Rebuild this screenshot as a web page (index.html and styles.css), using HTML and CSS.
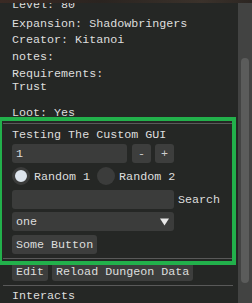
FILE: index.html
```html
<!DOCTYPE html>
<html lang="en">
<head>
<meta charset="utf-8">
<link rel="stylesheet" href="styles.css">
</head>
<body>
<div class="window">
  <div class="content">
    <div class="inner">
      <div class="line first">Level: 80</div>
      <div class="line">Expansion: Shadowbringers</div>
      <div class="line">Creator: Kitanoi</div>
      <div class="line">notes:</div>
      <div class="line wrap">Requirements:<br>Trust</div>
      <div class="line loot">Loot: Yes</div>

      <div class="group">
        <div class="separator"></div>
        <div class="line title">Testing The Custom GUI</div>
        <div class="row">
          <div class="frame num">1</div>
          <div class="frame btn step">-</div>
          <div class="frame btn step plus">+</div>
        </div>
        <div class="row">
          <span class="radio on"></span><span class="label">Random 1</span>
          <span class="radio second"></span><span class="label">Random 2</span>
        </div>
        <div class="row">
          <div class="frame wide"></div>
          <span class="label search">Search</span>
        </div>
        <div class="row">
          <div class="frame wide combo">one
            <svg class="arrow" width="9" height="8" viewBox="0 0 9 8"><path d="M0 0.5 H9 L4.5 7.5 Z" fill="#e8e8e8"/></svg>
          </div>
        </div>
        <div class="row">
          <div class="frame btn">Some Button</div>
        </div>
        <div class="separator"></div>
      </div>

      <div class="row buttons">
        <div class="frame btn">Edit</div>
        <div class="frame btn reload">Reload Dungeon Data</div>
      </div>
      <div class="separator bottom"></div>
      <div class="line interacts">Interacts</div>
    </div>
  </div>
  <div class="scrollbar"><div class="thumb"></div></div>
</div>
</body>
</html>
```

FILE: styles.css
```css
body {
  margin: 0;
  height: 303px;
  overflow: hidden;
  background: linear-gradient(90deg, #3a2a24, #2a2420 40%, #3b322b 80%, #2c2622);
  font-family: "Liberation Mono", monospace;
  font-size: 11.7px;
  color: #dedede;
}

.window {
  margin-top: 3px;
  height: 300px;
  display: flex;
  background: #252725;
}

.content {
  flex: 1;
  overflow: hidden;
}

.inner {
  margin: 0 5px 0 3px;
}

.line {
  line-height: 13px;
  height: 13px;
  padding-left: 9px;
  margin-bottom: 3.7px;
  white-space: nowrap;
}

.first {
  margin-top: -4.3px;
  margin-bottom: 6px;
}

.wrap {
  height: auto;
  line-height: 13.7px;
  margin-bottom: 12px;
}

.loot {
  margin-bottom: 2.9px;
}

.separator {
  height: 1px;
  background: #595959;
}

.group {
  position: relative;
}

.group::after {
  content: "";
  position: absolute;
  top: -6px;
  bottom: -6px;
  left: -5px;
  right: -3px;
  border: 4px solid #22b04b;
  z-index: 1;
}

.title {
  margin-top: 4.7px;
  margin-bottom: 2.3px;
}

.row {
  display: flex;
  align-items: center;
  height: 19px;
  padding-left: 9px;
  margin-bottom: 3.75px;
}

.frame {
  box-sizing: border-box;
  height: 19px;
  padding: 2px 4px 0;
  line-height: 17px;
  background: #3b3c3b;
  border-radius: 3px;
  white-space: nowrap;
}

.num {
  width: 115px;
}

.step {
  width: 19px;
  margin-left: 5px;
  text-align: center;
  padding: 2px 0 0;
  color: #cfcfcf;
}

.plus {
  margin-left: 4px;
}

.btn {
  background: #3d3e3d;
}

.radio {
  box-sizing: border-box;
  width: 18px;
  height: 18px;
  border-radius: 50%;
  background: #3b3c3b;
  flex: none;
}

.radio.on {
  border: 3px solid #3b3c3b;
  background: #dce4ec;
}

.radio.second {
  margin-left: 7px;
}

.label {
  margin-left: 4px;
  padding-top: 2px;
  line-height: 17px;
}

.wide {
  width: 162px;
}

.search {
  margin-left: 4px;
}

.combo {
  display: flex;
  justify-content: space-between;
  align-items: center;
}

.arrow {
  margin-right: 1px;
  margin-top: -2px;
}

.group .row:last-of-type {
  margin-bottom: 4px;
}

.buttons {
  margin-top: 3px;
  margin-bottom: 4px;
  gap: 4px;
}

.interacts {
  margin-top: 4.4px;
}

.scrollbar {
  width: 14px;
  flex: none;
  background: #424342;
  padding-top: 55px;
  box-sizing: border-box;
}

.thumb {
  width: 8px;
  height: 225px;
  margin-left: 3px;
  border-radius: 4px;
  background: #5b5c5b;
}
```
